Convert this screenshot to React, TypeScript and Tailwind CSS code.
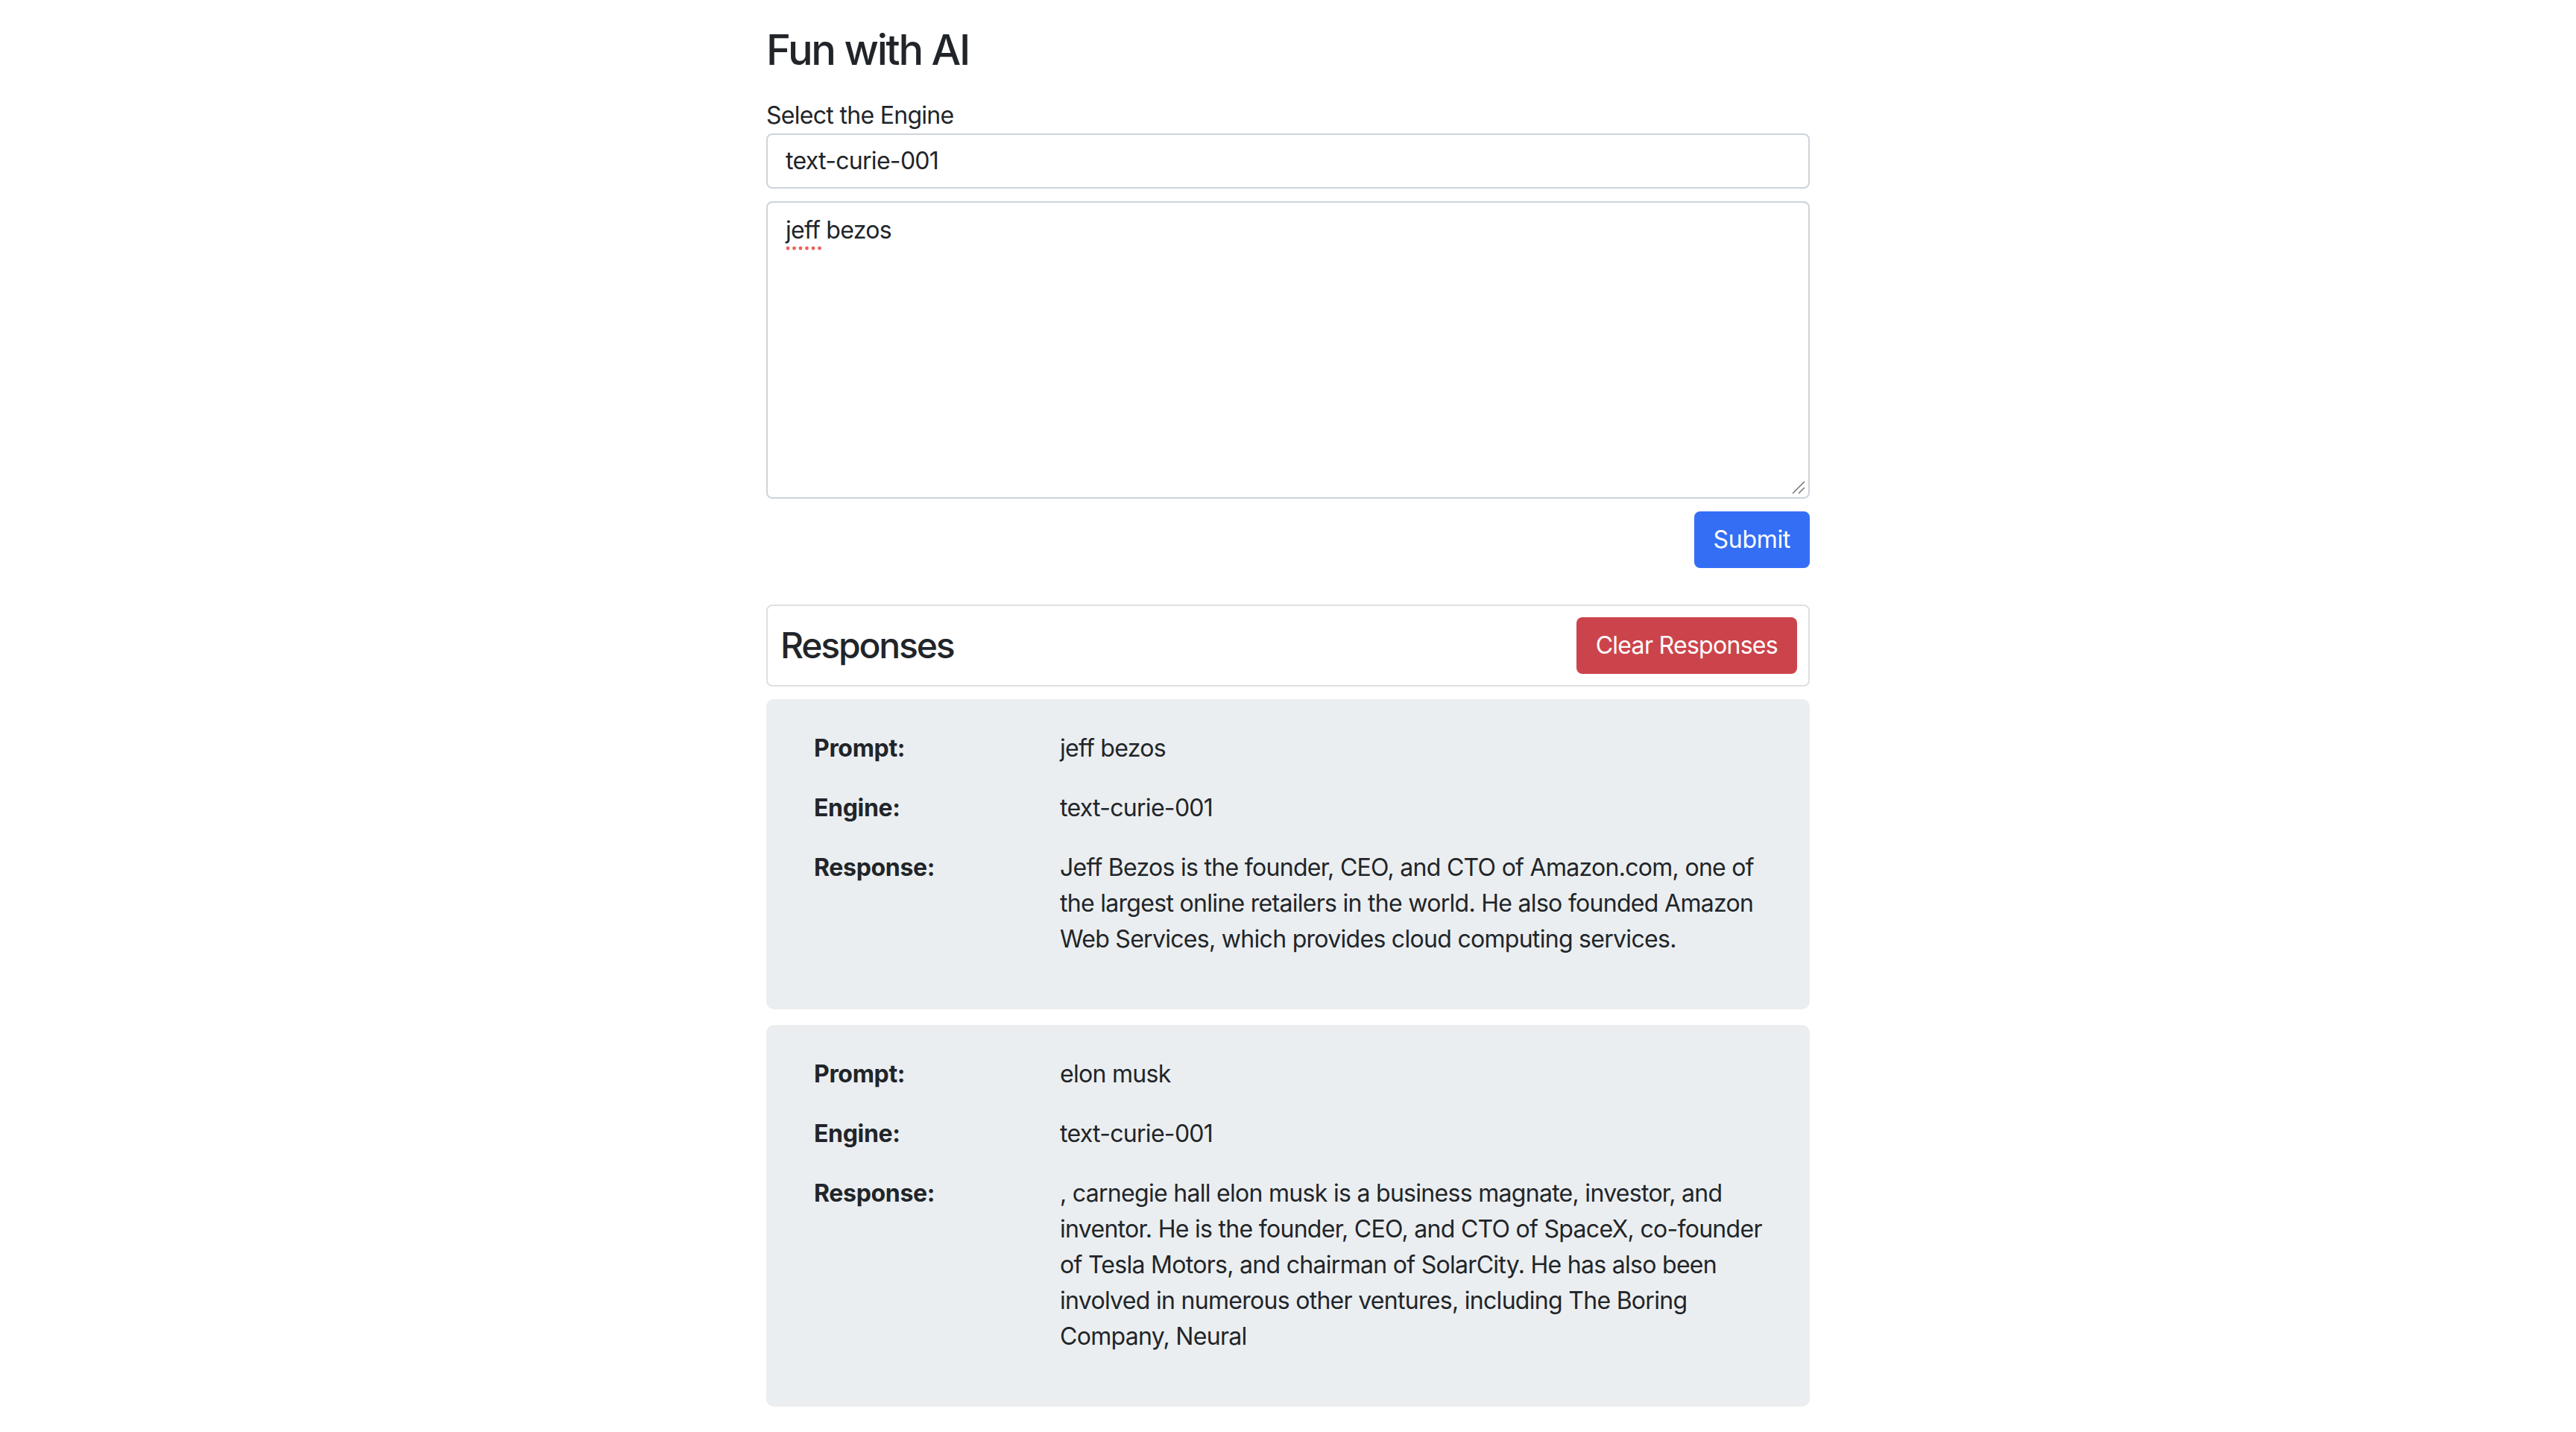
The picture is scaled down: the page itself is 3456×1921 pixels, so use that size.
import React from "react";

function Row({ label, children }: { label: string; children: React.ReactNode }) {
  return (
    <div className="grid grid-cols-[330px_1fr] mb-[32px]">
      <div className="font-bold tracking-[-0.01em]">{label}</div>
      <div>{children}</div>
    </div>
  );
}

function ResponseCard({ prompt, engine, lines, className }: { prompt: string; engine: string; lines: string[]; className: string }) {
  return (
    <div className={"bg-[#ebeef0] rounded-[10px] pl-[64px] pr-[40px] pt-[42px] pb-[38px] " + className}>
      <Row label="Prompt:">{prompt}</Row>
      <Row label="Engine:">{engine}</Row>
      <Row label="Response:">
        {lines.map((l, i) => (
          <div key={i} className="whitespace-nowrap">{l}</div>
        ))}
      </Row>
    </div>
  );
}

export default function App() {
  return (
    <div className="min-h-screen bg-white font-['Inter',sans-serif] text-[#212529] text-[32px] leading-[48px] tracking-[-0.022em]">
      <div className="mx-auto w-[1400px] pt-[34px] pb-[40px]">
        <h1 className="text-[56px] font-medium leading-[1.2] mb-[30px] tracking-[-0.04em]">Fun with AI</h1>
        <div>Select the Engine</div>
        <div className="h-[74px] border-2 border-[#ced4da] rounded-[8px] px-[24px] flex items-center">
          text-curie-001
        </div>
        <div className="relative mt-[17px] h-[399px] border-2 border-[#ced4da] rounded-[8px] px-[24px] py-[13px]">
          <span className="relative">
            jeff
            <svg className="absolute left-[1px] top-[40px]" width="48" height="8" viewBox="0 0 48 8">
              {[2, 10.5, 19, 27.5, 36, 44.5].map((x) => (
                <circle key={x} cx={x} cy="4" r="2.4" fill="#e8635a" />
              ))}
            </svg>
          </span>{" "}
          bezos
          <svg className="absolute right-[3px] bottom-[3px]" width="20" height="20" viewBox="0 0 20 20">
            <line x1="2" y1="18" x2="18" y2="2" stroke="#777" strokeWidth="1.6" />
            <line x1="10" y1="18" x2="18" y2="10" stroke="#777" strokeWidth="1.6" />
          </svg>
        </div>
        <div className="mt-[17px] flex justify-end">
          <button className="h-[76px] px-[26px] rounded-[8px] bg-[#346ef5] text-white tracking-[-0.01em]">Submit</button>
        </div>
        <div className="mt-[49px] border-2 border-[#dfdfdf] rounded-[8px] p-[15px] pl-[17px] flex justify-between items-center">
          <h2 className="text-[48px] font-medium leading-[1.2] tracking-[-0.045em]">Responses</h2>
          <button className="h-[76px] px-[26px] rounded-[8px] bg-[#cc444b] text-white">Clear Responses</button>
        </div>
        <ResponseCard
          className="mt-[17px]"
          prompt="jeff bezos"
          engine="text-curie-001"
          lines={[
            "Jeff Bezos is the founder, CEO, and CTO of Amazon.com, one of",
            "the largest online retailers in the world. He also founded Amazon",
            "Web Services, which provides cloud computing services.",
          ]}
        />
        <ResponseCard
          className="mt-[21px]"
          prompt="elon musk"
          engine="text-curie-001"
          lines={[
            ", carnegie hall elon musk is a business magnate, investor, and",
            "inventor. He is the founder, CEO, and CTO of SpaceX, co-founder",
            "of Tesla Motors, and chairman of SolarCity. He has also been",
            "involved in numerous other ventures, including The Boring",
            "Company, Neural",
          ]}
        />
      </div>
    </div>
  );
}
